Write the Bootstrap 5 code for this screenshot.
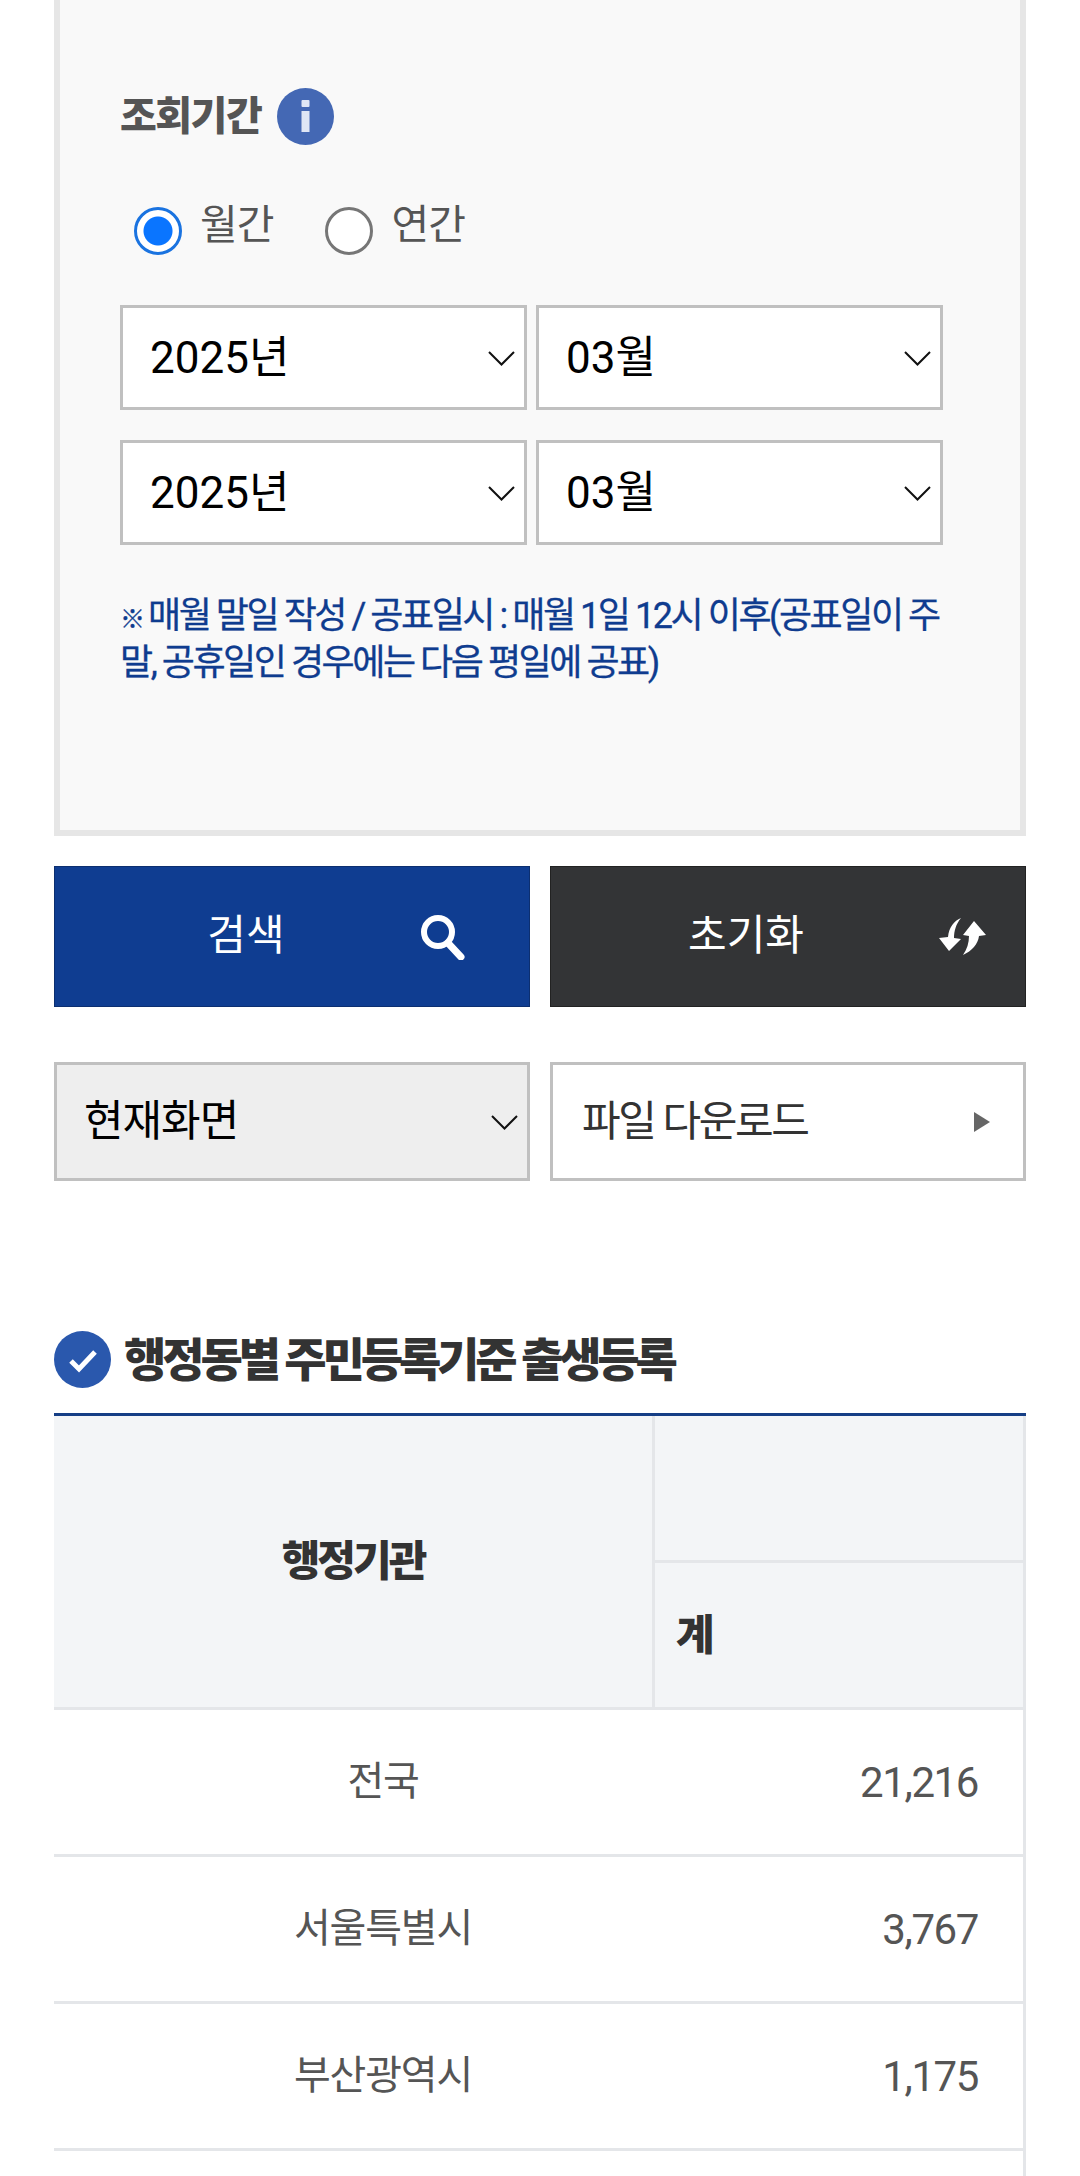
<!DOCTYPE html>
<html lang="ko">
<head>
    <meta charset="UTF-8">
    <meta name="viewport" content="width=device-width, initial-scale=1.0">
    <title>행정동별 주민등록기준 출생등록</title>
    <link href="https://cdn.jsdelivr.net/npm/bootstrap@5.3.0/dist/css/bootstrap.min.css" rel="stylesheet">
    <style>
        body { font-family: Roboto, "Noto Sans CJK KR", sans-serif; background: #fff; }
        .page-frame { height: 2176px; overflow: hidden; padding: 0 54px; }

        /* 조회 영역 */
        .search-panel { height: 836px; background: #f9f9f9; border: 6px solid #e6e6e6; border-top: 0; padding: 88px 77px 0 60px; }
        .title-row { gap: 16px; }
        .panel-title { font-size: 40px; line-height: 50px; font-weight: 900; color: #555; letter-spacing: -1.5px; margin: 0; }
        .round-icon { flex: none; display: block; }
        .radio-row { margin: 60px 0 0 14px; gap: 52px; height: 52px; }
        .radio-item { display: flex; align-items: center; gap: 18px; margin: 0; font-size: 41px; line-height: 48px; color: #555; letter-spacing: -1px; }
        .radio-item span { position: relative; top: -6px; }
        .radio-item .form-check-input { width: 48px; height: 48px; margin: 0; flex: none; background-color: #fff; border: 3px solid #767676; background-image: none; }
        .radio-item .form-check-input:checked { border-color: #1a73e0; background-color: #fff; background-image: radial-gradient(circle at center, #0a75ff 0, #0a75ff 14px, #fff 15px); }
        .radio-item .form-check-input:focus { box-shadow: none; }
        .period-row-first { margin-top: 48px; }
        .period-row { margin-top: 30px; }
        .period-select { width: 407px; height: 105px; border: 3px solid #c0c0c0; border-radius: 0; padding: 0 50px 0 27px; font-size: 44px; color: #000; background-color: #fff; background-position: right 9px center; background-size: 27px 27px; background-image: url("data:image/svg+xml,%3csvg xmlns='http://www.w3.org/2000/svg' viewBox='0 0 27 27'%3e%3cpath fill='none' stroke='%23111' stroke-width='2' d='M1 8l12.5 12.5L26 8'/%3e%3c/svg%3e"); }
        .note-text { margin: 48px 0 0; font-size: 36px; line-height: 47px; color: #0f3c8f; letter-spacing: -2.45px; font-weight: 400; -webkit-text-stroke: 0.3px #0f3c8f; }
        .note-mark { display: inline-block; font-size: 25px; line-height: 1; letter-spacing: 0; margin-right: 3px; }

        /* 버튼 */
        .action-row { margin-top: 30px; }
        .action-btn { width: 476px; height: 141px; border-radius: 0; position: relative; font-size: 42px; color: #fff; padding: 0 0 2px; display: flex; align-items: center; justify-content: center; }
        .action-btn:hover { color: #fff; }
        .btn-search { background: #0f3d91; border: 1px solid #0c2f70; padding-right: 92px; }
        .btn-reset { background: #333436; border: 1px solid #222; padding-right: 84px; }
        .btn-glyph { position: absolute; top: 50%; transform: translateY(-50%); }
        .btn-search .btn-glyph { right: 64px; }
        .btn-reset .btn-glyph { right: 38px; }
        .tool-row { margin-top: 55px; }
        .view-select { width: 476px; height: 119px; border: 3px solid #c0c0c0; border-radius: 0; padding: 0 50px 0 27px; font-size: 43px; letter-spacing: -1px; color: #000; background-color: #eee; background-position: right 9px center; background-size: 27px 27px; background-image: url("data:image/svg+xml,%3csvg xmlns='http://www.w3.org/2000/svg' viewBox='0 0 27 27'%3e%3cpath fill='none' stroke='%23111' stroke-width='2' d='M1 8l12.5 12.5L26 8'/%3e%3c/svg%3e"); }
        .file-btn { width: 476px; height: 119px; border: 3px solid #c0c0c0; background: #fff; padding: 0 33px 0 29px; font-size: 42px; letter-spacing: -2.4px; color: #333; }

        /* 표 */
        .section-title { margin: 150px 0 0; height: 57px; gap: 13px; }
        .section-title h3 { margin: 0; padding-top: 2px; font-size: 46px; line-height: 57px; font-weight: 900; color: #333; letter-spacing: -4.1px; }
        .stat-table { margin: 25px 0 0; width: 972px; table-layout: fixed; border-collapse: separate; border-spacing: 0; border-top: 3px solid #153e85; font-size: 40px; }
        .stat-table th, .stat-table td { border: 0 solid #e4e6e9; border-bottom-width: 3px; box-shadow: none; padding: 0; vertical-align: middle; }
        .stat-table th { background: #f3f5f7; color: #333; font-weight: 900; font-size: 42px; letter-spacing: -3px; height: 147px; }
        .stat-table .col-side { border-left-width: 3px; }
        .stat-table td { height: 147px; color: #555; letter-spacing: -1.2px; background: #fff; }
        .stat-table td.area-name { text-align: center; padding-left: 60px; }
        .stat-table td.area-count { text-align: right; padding-right: 45px; border-right-width: 3px; font-size: 42px; letter-spacing: -1.4px; }
        .stat-table th.col-end { border-right-width: 3px; }
        .stat-table th.total-head { padding-left: 21px; }
    </style>
</head>
<body>
    <div class="page-frame">
        <!-- 조회 조건 -->
        <div class="search-panel">
            <div class="d-flex align-items-center title-row">
                <h2 class="panel-title">조회기간</h2>
                <svg class="round-icon" width="57" height="57" viewBox="0 0 57 57">
                    <circle cx="28.5" cy="28.5" r="28.5" fill="#4468b4"/>
                    <rect x="24.5" y="12" width="8" height="7" rx="1" fill="#dfe6f5"/>
                    <rect x="24.5" y="23" width="8" height="21" fill="#dfe6f5"/>
                </svg>
            </div>
            <div class="d-flex radio-row">
                <label class="radio-item"><input class="form-check-input" type="radio" name="term" checked><span>월간</span></label>
                <label class="radio-item"><input class="form-check-input" type="radio" name="term"><span>연간</span></label>
            </div>
            <div class="d-flex justify-content-between period-row-first">
                <select class="form-select period-select"><option>2025년</option></select>
                <select class="form-select period-select"><option>03월</option></select>
            </div>
            <div class="d-flex justify-content-between period-row">
                <select class="form-select period-select"><option>2025년</option></select>
                <select class="form-select period-select"><option>03월</option></select>
            </div>
            <p class="note-text"><span class="note-mark">※</span>매월 말일 작성 / 공표일시 : 매월 1일 12시 이후(공표일이 주말, 공휴일인 경우에는 다음 평일에 공표)</p>
        </div>

        <!-- 버튼 -->
        <div class="d-flex justify-content-between action-row">
            <button type="button" class="btn action-btn btn-search">검색
                <svg class="btn-glyph" width="46" height="46" viewBox="0 0 46 46">
                    <circle cx="19" cy="18" r="14" fill="none" stroke="#fff" stroke-width="6"/>
                    <path d="M29 29l13 14" stroke="#fff" stroke-width="7" stroke-linecap="round"/>
                </svg>
            </button>
            <button type="button" class="btn action-btn btn-reset">초기화
                <svg class="btn-glyph" width="48" height="38" viewBox="0 0 48 38">
                    <path d="M22 0C15 3 10 9 9 19L0 20l10 13 12-12-7-1C15 13 17 6 22 0z" fill="#fff"/>
                    <path d="M35 3l12 14-7 1C39 26 33 33 24 37c4-6 6-12 6-19l-6-1z" fill="#fff"/>
                </svg>
            </button>
        </div>

        <div class="d-flex justify-content-between tool-row">
            <select class="form-select view-select"><option>현재화면</option></select>
            <button type="button" class="btn rounded-0 file-btn d-flex align-items-center justify-content-between">파일 다운로드
                <svg width="16" height="20" viewBox="0 0 16 20"><path d="M0 0l16 10L0 20z" fill="#666"/></svg>
            </button>
        </div>

        <!-- 표 -->
        <div class="d-flex align-items-center section-title">
            <svg class="round-icon" width="57" height="57" viewBox="0 0 57 57">
                <circle cx="28.5" cy="28.5" r="28.5" fill="#2a58ad"/>
                <path d="M17 30l8 8 16-17" fill="none" stroke="#fff" stroke-width="5"/>
            </svg>
            <h3>행정동별 주민등록기준 출생등록</h3>
        </div>
        <table class="table stat-table">
            <colgroup><col style="width:598px"><col></colgroup>
            <thead>
                <tr>
                    <th rowspan="2" class="text-center">행정기관</th>
                    <th class="col-side col-end"></th>
                </tr>
                <tr>
                    <th class="col-side col-end total-head">계</th>
                </tr>
            </thead>
            <tbody>
                <tr><td class="area-name">전국</td><td class="area-count">21,216</td></tr>
                <tr><td class="area-name">서울특별시</td><td class="area-count">3,767</td></tr>
                <tr><td class="area-name">부산광역시</td><td class="area-count">1,175</td></tr>
                <tr><td class="area-name"></td><td class="area-count"></td></tr>
            </tbody>
        </table>
    </div>
    <script src="https://cdn.jsdelivr.net/npm/bootstrap@5.3.0/dist/js/bootstrap.bundle.min.js"></script>
</body>
</html>
